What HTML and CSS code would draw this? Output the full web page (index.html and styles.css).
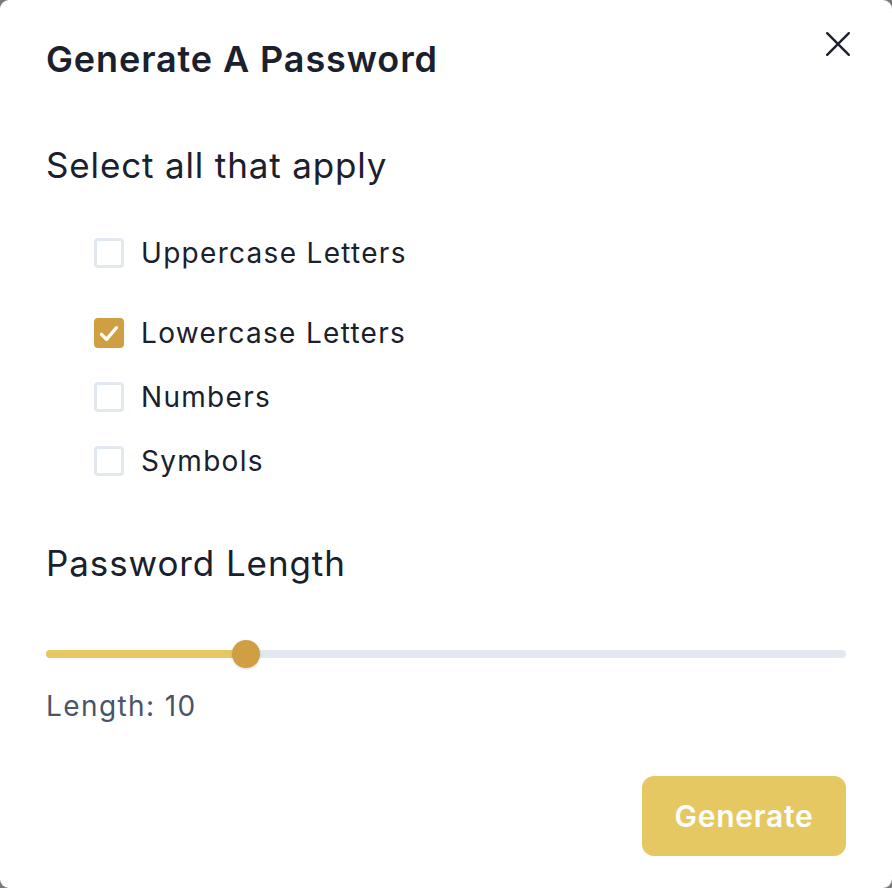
FILE: index.html
```html
<!DOCTYPE html>
<html lang="en">
<head>
<meta charset="utf-8">
<title>Generate A Password</title>
<link rel="stylesheet" href="styles.css">
</head>
<body>
<div class="modal">
  <header class="modal-header">
    <h1 class="title">Generate A Password</h1>
    <button class="close" aria-label="Close">
      <svg viewBox="0 0 24 24" width="26" height="26"><path d="M2 2 L22 22 M22 2 L2 22" stroke="#1a202c" stroke-width="2.2" stroke-linecap="round" fill="none"/></svg>
    </button>
  </header>
  <section class="section">
    <h2 class="subtitle">Select all that apply</h2>
    <div class="options">
      <label class="option first"><span class="box"></span><span>Uppercase Letters</span></label>
      <label class="option"><span class="box checked"><svg viewBox="0 0 12 10" width="20" height="17"><polyline points="1.5,5.5 4.5,8.5 10.5,1.5" fill="none" stroke="#fff" stroke-width="2" stroke-linecap="round" stroke-linejoin="round"/></svg></span><span>Lowercase Letters</span></label>
      <label class="option"><span class="box"></span><span>Numbers</span></label>
      <label class="option"><span class="box"></span><span>Symbols</span></label>
    </div>
  </section>
  <section class="section length">
    <h2 class="subtitle">Password Length</h2>
    <div class="slider">
      <div class="track"><div class="fill" style="width:25%"></div></div>
      <div class="thumb" style="left:25%"></div>
    </div>
    <p class="length-label">Length: 10</p>
  </section>
  <footer class="footer">
    <button class="generate">Generate</button>
  </footer>
</div>
</body>
</html>
```
FILE: styles.css
```css
html, body {
  margin: 0;
  padding: 0;
  background: #7a7a7a;
}
body {
  font-family: Inter, "Noto Sans", sans-serif;
  color: #1a202c;
}
.modal {
  width: 892px;
  height: 888px;
  box-sizing: border-box;
  background: #fff;
  border-radius: 9px;
  padding: 0 46px;
  display: flex;
  flex-direction: column;
}
.modal-header {
  display: flex;
  justify-content: space-between;
  align-items: flex-start;
  padding-top: 36px;
}
.title {
  margin: 0;
  font-size: 36px;
  font-weight: 600;
  line-height: 46px;
  letter-spacing: 0.9px;
}
.close {
  border: 0;
  background: none;
  padding: 0;
  margin: -17px -17px 0 0;
  width: 50px;
  height: 50px;
  display: flex;
  align-items: center;
  justify-content: center;
}
.section { margin-top: 61px; }
.subtitle {
  margin: 0;
  font-size: 35px;
  font-weight: 400;
  line-height: 44px;
  letter-spacing: 0.85px;
}
.options {
  display: flex;
  flex-direction: column;
  padding-left: 48px;
  margin-top: 34px;
}
.option {
  display: flex;
  align-items: center;
  gap: 17px;
  font-size: 28px;
  letter-spacing: 1.3px;
  height: 64px;
}
.option.first { margin-bottom: 16px; }
.box {
  width: 30px;
  height: 30px;
  box-sizing: border-box;
  border: 3px solid #e2e8f0;
  border-radius: 4px;
  display: flex;
  align-items: center;
  justify-content: center;
}
.box.checked {
  background: #d09f43;
  border-color: #d09f43;
}
.length { margin-top: 48px; }
.length .subtitle { letter-spacing: 0.9px; }
.slider {
  position: relative;
  margin-top: 55px;
  height: 28px;
  display: flex;
  align-items: center;
}
.track {
  width: 100%;
  height: 8px;
  background: #e2e8f0;
  border-radius: 4px;
  overflow: hidden;
}
.fill {
  height: 100%;
  background: #e6c862;
}
.thumb {
  position: absolute;
  top: 0;
  width: 28px;
  height: 28px;
  margin-left: -14px;
  border-radius: 50%;
  background: #d09f43;
  box-shadow: 0 1px 3px rgba(0,0,0,0.15);
}
.length-label {
  margin: 18px 0 0;
  font-size: 28px;
  color: #4a5568;
  line-height: 40px;
  letter-spacing: 1.4px;
}
.footer {
  margin-top: auto;
  padding-bottom: 32px;
  display: flex;
  justify-content: flex-end;
}
.generate {
  width: 204px;
  height: 80px;
  border: 0;
  border-radius: 12px;
  background: #e6c862;
  color: #fff;
  font-family: Inter, "Noto Sans", sans-serif;
  font-size: 30px;
  font-weight: 600;
  letter-spacing: 0.7px;
}
```
